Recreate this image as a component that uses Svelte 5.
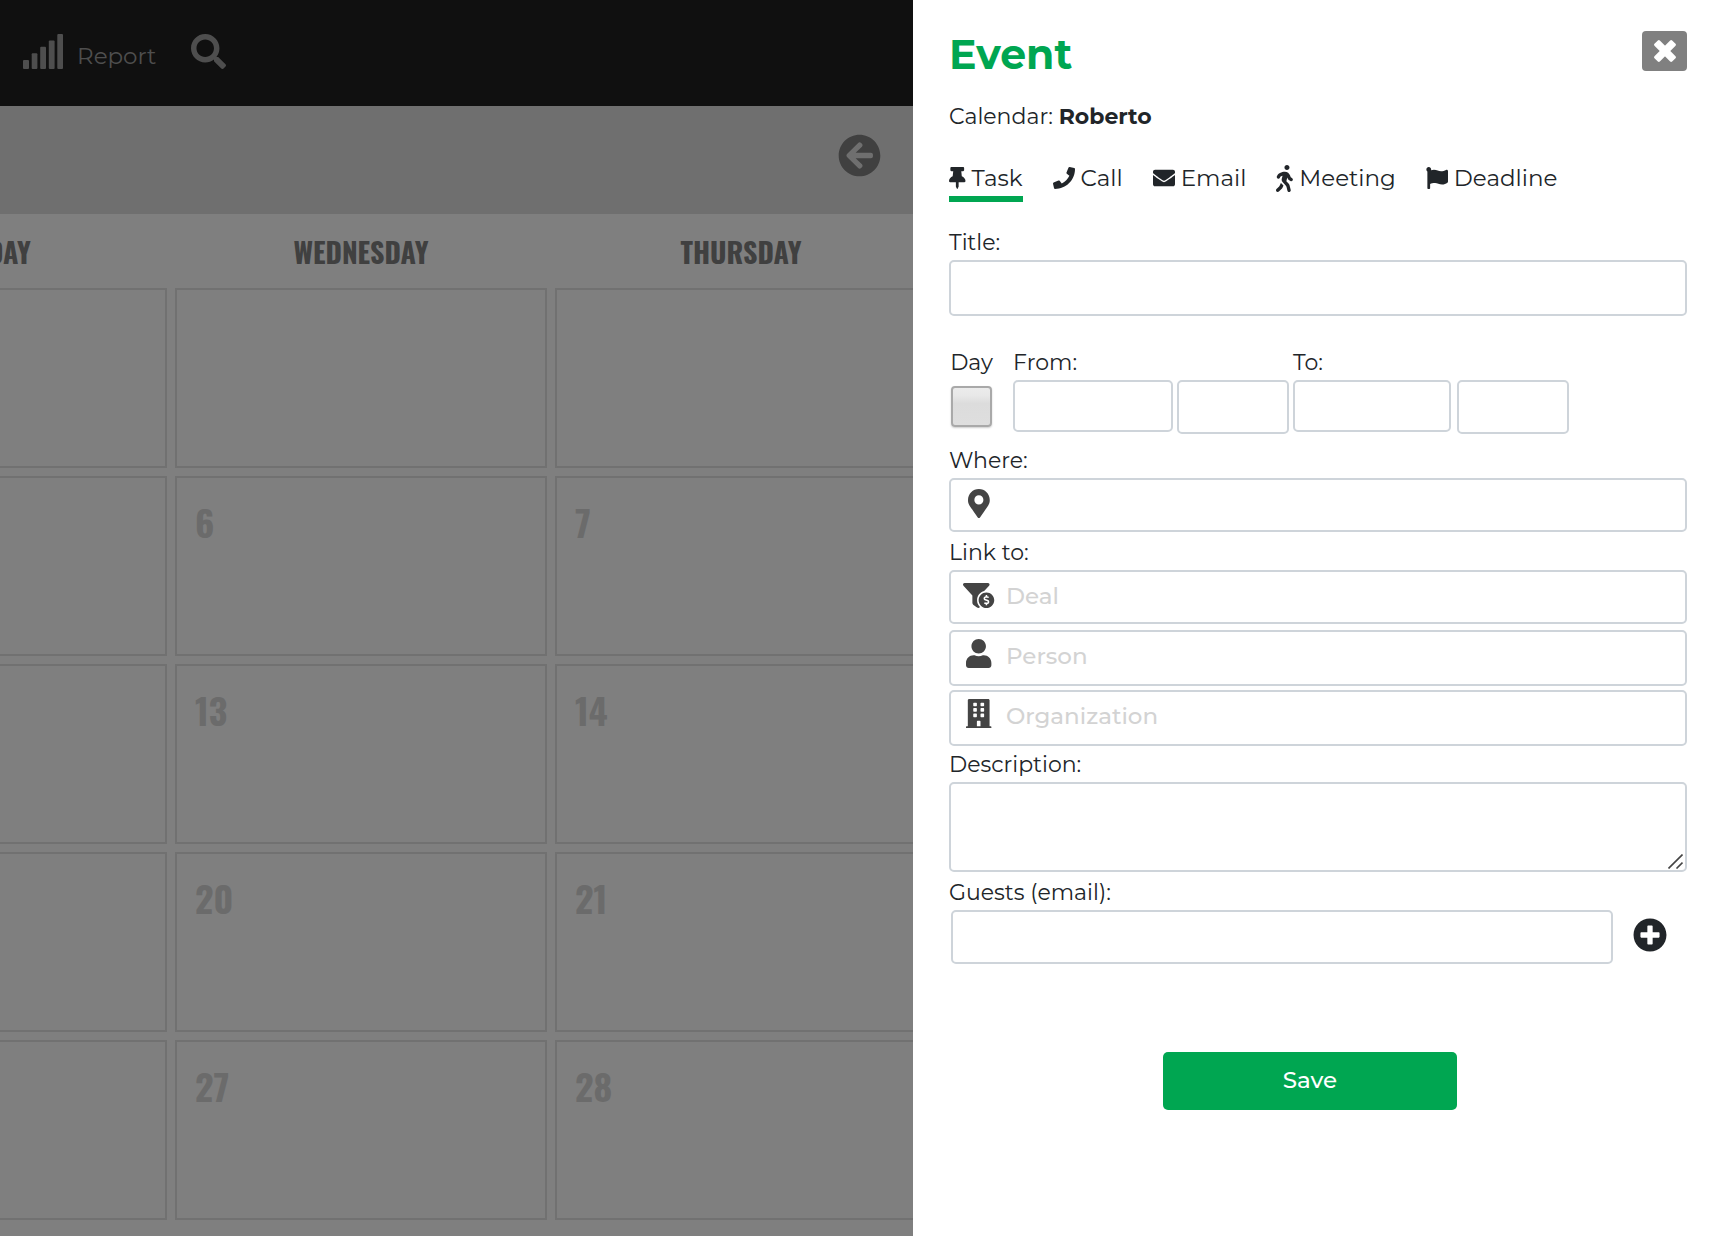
<script lang="ts">
  const icons = {
    search: { w: 512, d: 'M505 442.7L405.3 343c-4.5-4.5-10.6-7-17-7H372c27.6-35.3 44-79.7 44-128C416 93.1 322.9 0 208 0S0 93.1 0 208s93.1 208 208 208c48.3 0 92.7-16.4 128-44v16.3c0 6.4 2.5 12.5 7 17l99.7 99.7c9.4 9.4 24.6 9.4 33.9 0l28.3-28.3c9.4-9.4 9.4-24.6.1-34zM208 336c-70.7 0-128-57.2-128-128 0-70.7 57.2-128 128-128 70.7 0 128 57.2 128 128 0 70.7-57.2 128-128 128z' },
    back: { w: 512, d: 'M256 504C119 504 8 393 8 256S119 8 256 8s248 111 248 248-111 248-248 248zm28.9-143.6L209.4 288H392c13.3 0 24-10.7 24-24v-16c0-13.3-10.7-24-24-24H209.4l75.5-72.4c9.7-9.3 9.9-24.8.4-34.3l-11-10.9c-9.4-9.4-24.6-9.4-33.9 0L107.7 239c-9.4 9.4-9.4 24.6 0 33.9l132.7 132.7c9.4 9.4 24.6 9.4 33.9 0l11-10.9c9.5-9.5 9.3-25-.4-34.3z' },
    thumbtack: { w: 384, d: 'M298.028 214.267L285.793 96H328c13.255 0 24-10.745 24-24V24c0-13.255-10.745-24-24-24H56C42.745 0 32 10.745 32 24v48c0 13.255 10.745 24 24 24h42.207L85.972 214.267C37.465 236.82 0 277.261 0 328c0 13.255 10.745 24 24 24h136v104.007c0 1.242.289 2.467.845 3.578l24 48c2.941 5.882 11.364 5.893 14.311 0l24-48a8.008 8.008 0 0 0 .845-3.578V352h136c13.255 0 24-10.745 24-24-.001-51.183-37.983-91.42-85.973-113.733z' },
    phone: { w: 512, d: 'M493.4 24.6l-104-24c-11.3-2.6-22.9 3.3-27.5 13.9l-48 112c-4.2 9.8-1.4 21.3 6.9 28l60.6 49.6c-36 76.7-98.9 140.5-177.2 177.2l-49.6-60.6c-6.8-8.3-18.2-11.1-28-6.9l-112 48C3.9 366.5-2 378.1.6 389.4l24 104C27.1 504.2 36.7 512 48 512c256.1 0 464-207.5 464-464 0-11.2-7.7-20.9-18.6-23.4z' },
    envelope: { w: 512, d: 'M502.3 190.8c3.9-3.1 9.7-.2 9.7 4.7V400c0 26.5-21.5 48-48 48H48c-26.5 0-48-21.5-48-48V195.6c0-5 5.7-7.8 9.7-4.7 22.4 17.4 52.1 39.5 154.1 113.6 21.1 15.4 56.7 47.8 92.2 47.6 35.7.3 72-32.8 92.3-47.6 102-74.1 131.6-96.3 154-113.7zM256 320c23.2.4 56.6-29.2 73.4-41.4 132.7-96.3 142.8-104.7 173.4-128.7 5.8-4.5 9.2-11.5 9.2-18.9v-19c0-26.5-21.5-48-48-48H48c-26.5 0-48 21.5-48 48v19c0 7.4 3.4 14.3 9.2 18.9 30.6 23.9 40.7 32.4 173.4 128.7 16.8 12.2 50.2 41.8 73.4 41.4z' },
    walking: { w: 320, d: 'M208 96c26.5 0 48-21.5 48-48S234.5 0 208 0s-48 21.5-48 48 21.5 48 48 48zm94.5 149.1l-23.3-11.8-9.7-29.4c-14.7-44.6-55.7-75.8-102.2-75.9-36-.1-55.9 10.1-93.3 25.2-21.6 8.7-39.3 25.2-49.7 46.2L17.6 213c-7.8 15.8-1.5 35 14.2 42.9 15.6 7.9 34.6 1.5 42.5-14.3L81 228c3.5-7 9.3-12.5 16.5-15.4l26.8-10.8-15.2 60.7c-5.2 20.8.4 42.9 14.9 58.8l59.9 65.4c7.2 7.9 12.3 17.4 14.9 27.7l18.3 73.3c4.3 17.1 21.7 27.6 38.8 23.3 17.1-4.3 27.6-21.7 23.3-38.8l-22.2-89c-2.6-10.3-7.7-19.9-14.9-27.7l-45.5-49.7 17.2-68.7 5.5 16.5c5.3 16.1 16.7 29.4 31.7 37l23.3 11.8c15.6 7.9 34.6 1.5 42.5-14.3 7.7-15.7 1.4-35.1-14.3-43zM73.6 385.8c-3.2 8.1-8 15.4-14.2 21.5l-50 50.1c-12.5 12.5-12.5 32.8 0 45.3s32.7 12.5 45.2 0l59.4-59.4c6.1-6.1 10.9-13.4 14.2-21.5l13.5-33.8c-55.3-60.3-38.7-41.8-47.4-53.7l-20.7 51.5z' },
    flag: { w: 512, d: 'M349.565 98.783C295.978 98.783 251.721 64 184.348 64c-24.955 0-47.309 4.384-68.045 12.013a55.947 55.947 0 0 0 3.586-23.562C118.117 24.015 94.806 1.206 66.338.048 34.345-1.254 8 24.296 8 56c0 19.026 9.497 35.825 24 45.945V488c0 13.255 10.745 24 24 24h16c13.255 0 24-10.745 24-24v-94.4c28.311-12.064 63.582-22.122 114.435-22.122 53.588 0 97.844 34.783 165.217 34.783 48.169 0 86.667-16.294 122.505-40.858C506.84 359.452 512 349.571 512 339.045v-243.1c0-23.393-24.269-38.87-45.485-29.016-34.338 15.948-76.454 31.854-116.95 31.854z' },
    marker: { w: 384, d: 'M172.268 501.67C26.97 291.031 0 269.413 0 192 0 85.961 85.961 0 192 0s192 85.961 192 192c0 77.413-26.97 99.031-172.268 309.67-9.535 13.774-29.93 13.773-39.464 0zM192 272c44.183 0 80-35.817 80-80s-35.817-80-80-80-80 35.817-80 80 35.817 80 80 80z' },
    funnel: { w: 640, d: 'M433.46 165.94l101.2-111.87C554.61 34.12 540.48 0 512.26 0H31.74C3.52 0-10.61 34.12 9.34 54.07L192 256v155.92c0 12.59 5.93 24.44 16 32l79.99 60c20.86 15.64 48.47 6.97 59.22-13.57C310.8 455.38 288 406.35 288 352c0-89.79 62.05-165.17 145.46-186.06zM480 192c-88.37 0-160 71.63-160 160s71.63 160 160 160 160-71.63 160-160-71.63-160-160-160zm16 239.88V448c0 4.42-3.58 8-8 8h-16c-4.42 0-8-3.58-8-8v-16.29c-11.29-.58-22.27-4.52-31.37-11.35-3.9-2.93-4.1-8.77-.57-12.14l11.75-11.21c2.77-2.64 6.89-2.76 10.13-.73 3.87 2.42 8.26 3.72 12.82 3.72h28.11c6.5 0 11.8-5.92 11.8-13.19 0-5.95-3.61-11.19-8.77-12.73l-45-13.5c-18.59-5.58-31.58-23.42-31.58-43.39 0-24.52 19.05-44.44 42.67-45.07V256c0-4.42 3.58-8 8-8h16c4.42 0 8 3.58 8 8v16.29c11.29.58 22.27 4.51 31.37 11.35 3.9 2.93 4.1 8.77.57 12.14l-11.75 11.21c-2.77 2.64-6.89 2.76-10.13.73-3.87-2.43-8.26-3.72-12.82-3.72h-28.11c-6.5 0-11.8 5.92-11.8 13.19 0 5.95 3.61 11.19 8.77 12.73l45 13.5c18.59 5.58 31.58 23.42 31.58 43.39 0 24.53-19.04 44.44-42.67 45.07z' },
    user: { w: 448, d: 'M224 256c70.7 0 128-57.3 128-128S294.7 0 224 0 96 57.3 96 128s57.3 128 128 128zm89.6 32h-16.7c-22.2 10.2-46.9 16-72.9 16s-50.6-5.8-72.9-16h-16.7C60.2 288 0 348.2 0 422.4V464c0 26.5 21.5 48 48 48h352c26.5 0 48-21.5 48-48v-41.6c0-74.2-60.2-134.4-134.4-134.4z' },
    building: { w: 448, d: 'M436 480h-20V24c0-13.3-10.7-24-24-24H56C42.7 0 32 10.7 32 24v456H12c-6.6 0-12 5.4-12 12v20h448v-20c0-6.6-5.4-12-12-12zM140 64h40q12 0 12 12v40q0 12-12 12h-40q-12 0-12-12V76q0-12 12-12zM268 64h40q12 0 12 12v40q0 12-12 12h-40q-12 0-12-12V76q0-12 12-12zM140 160h40q12 0 12 12v40q0 12-12 12h-40q-12 0-12-12v-40q0-12 12-12zM268 160h40q12 0 12 12v40q0 12-12 12h-40q-12 0-12-12v-40q0-12 12-12zM140 256h40q12 0 12 12v40q0 12-12 12h-40q-12 0-12-12v-40q0-12 12-12zM268 256h40q12 0 12 12v40q0 12-12 12h-40q-12 0-12-12v-40q0-12 12-12zM204 384h40q12 0 12 12v84h-64v-84q0-12 12-12z' },
    plus: { w: 512, d: 'M256 8C119 8 8 119 8 256s111 248 248 248 248-111 248-248S393 8 256 8zm144 276c0 6.6-5.4 12-12 12h-92v92c0 6.6-5.4 12-12 12h-56c-6.6 0-12-5.4-12-12v-92h-92c-6.6 0-12-5.4-12-12v-56c0-6.6 5.4-12 12-12h92v-92c0-6.6 5.4-12 12-12h56c6.6 0 12 5.4 12 12v92h92c6.6 0 12 5.4 12 12v56z' },
  };

  type IconName = keyof typeof icons;

  const weekdays = ['Tuesday', 'Wednesday', 'Thursday'];
  const days = ['', '', '', '', '6', '7', '', '13', '14', '', '20', '21', '', '27', '28'];

  const types: { label: string; icon: IconName; big?: boolean }[] = [
    { label: 'Task', icon: 'thumbtack' },
    { label: 'Call', icon: 'phone' },
    { label: 'Email', icon: 'envelope' },
    { label: 'Meeting', icon: 'walking', big: true },
    { label: 'Deadline', icon: 'flag' },
  ];

  const links: { label: string; icon: IconName }[] = [
    { label: 'Deal', icon: 'funnel' },
    { label: 'Person', icon: 'user' },
    { label: 'Organization', icon: 'building' },
  ];

  let selected = $state('Task');
</script>

{#snippet icon(name: IconName)}
  <svg class="icon" viewBox="0 0 {icons[name].w} 512" aria-hidden="true">
    <path fill="currentColor" fill-rule="evenodd" d={icons[name].d} />
  </svg>
{/snippet}

<div class="page">
  <main class="calendar">
    <header class="topbar">
      <a class="report" href="/report">
        <svg class="signal" viewBox="0 0 40 35" aria-hidden="true">
          <rect x="0" y="26" width="6" height="9" rx="1" />
          <rect x="8.7" y="19.3" width="5.7" height="15.7" rx="1" />
          <rect x="17.2" y="12.8" width="5.8" height="22.2" rx="1" />
          <rect x="25.8" y="6.4" width="5.8" height="28.6" rx="1" />
          <rect x="34.3" y="0" width="5.7" height="35" rx="1" />
        </svg>
        <span>Report</span>
      </a>
      <button class="search" type="button" aria-label="Search">{@render icon('search')}</button>
    </header>

    <div class="toolbar">
      <button class="back" type="button" aria-label="Previous month">{@render icon('back')}</button>
    </div>

    <div class="month">
      {#each weekdays as weekday}
        <div class="weekday">{weekday}</div>
      {/each}
      {#each days as day}
        <div class="day">{day}</div>
      {/each}
    </div>
  </main>

  <aside class="drawer" aria-labelledby="event-heading">
    <div class="drawer-head">
      <h1 id="event-heading">Event</h1>
      <button class="close" type="button" aria-label="Close">
        <svg viewBox="0 0 24 24" aria-hidden="true">
          <g transform="rotate(45 12 12)" fill="currentColor">
            <rect x="-.5" y="8.2" width="25" height="7.6" rx="1.4" />
            <rect x="8.2" y="-.5" width="7.6" height="25" rx="1.4" />
          </g>
        </svg>
      </button>
    </div>

    <p class="owner">Calendar: <strong>Roberto</strong></p>

    <div class="types">
      {#each types as type}
        <button
          class="type"
          class:active={selected === type.label}
          class:big={type.big}
          type="button"
          aria-pressed={selected === type.label}
          onclick={() => (selected = type.label)}
        >
          {@render icon(type.icon)}
          {type.label}
        </button>
      {/each}
    </div>

    <form onsubmit={(e) => e.preventDefault()}>
      <label for="title">Title:</label>
      <input class="box tall" id="title" type="text" />

      <div class="when">
        <div class="all-day">
          <label for="day">Day</label>
          <input id="day" type="checkbox" />
        </div>
        <div class="date from">
          <label for="from">From:</label>
          <input class="box short" id="from" type="text" />
        </div>
        <input class="box time" type="text" aria-label="From time" />
        <div class="date to">
          <label for="to">To:</label>
          <input class="box short" id="to" type="text" />
        </div>
        <input class="box time last" type="text" aria-label="To time" />
      </div>

      <label for="where">Where:</label>
      <div class="box with-icon">
        <span class="slot">{@render icon('marker')}</span>
        <input id="where" type="text" />
      </div>

      <label class="spaced" for="link-deal">Link to:</label>
      <div class="links">
        {#each links as link, i}
          <div class="box with-icon" class:tall={i > 0}>
            <span class="slot" class:wide={link.icon === 'funnel'}>{@render icon(link.icon)}</span>
            <input id="link-{link.label.toLowerCase()}" type="text" placeholder={link.label} aria-label={link.label} />
          </div>
        {/each}
      </div>

      <label for="description">Description:</label>
      <div class="description">
        <textarea class="box" id="description"></textarea>
        <svg class="grip" viewBox="0 0 15 15" aria-hidden="true">
          <path d="M.5 14.5l14-14M8.5 14.5l6-6" fill="none" stroke="#444" stroke-width="1.6" />
        </svg>
      </div>

      <label class="spaced" for="guests">Guests (email):</label>
      <div class="guests">
        <input class="box" id="guests" type="email" />
        <button class="add" type="button" aria-label="Add guest">{@render icon('plus')}</button>
      </div>

      <div class="actions">
        <button class="save" type="submit">Save</button>
      </div>
    </form>
  </aside>
</div>

<style>
  :global(body) {
    background: #fff;
  }

  .page {
    display: grid;
    grid-template-columns: minmax(0, 1fr) 808px;
    min-height: 100vh;
    font-family: Montserrat, Inter, "Noto Sans", sans-serif;
    color: #212529;
  }

  .page *,
  .page *::after {
    box-sizing: border-box;
  }

  button {
    margin: 0;
    border: 0;
    padding: 0;
    background: none;
    color: inherit;
    font: inherit;
    cursor: pointer;
  }

  .icon {
    display: block;
    height: 100%;
  }

  .calendar {
    position: relative;
    overflow: hidden;
    background: #fff;
  }

  .calendar::after {
    content: "";
    position: absolute;
    inset: 0;
    background: rgba(0, 0, 0, 0.5);
  }

  .topbar {
    display: flex;
    align-items: center;
    gap: 35px;
    height: 106px;
    padding: 0 23px 3px;
    background: #202020;
    color: #9c9c9c;
  }

  .report {
    display: flex;
    align-items: center;
    gap: 14px;
    color: inherit;
    font-size: 23px;
    line-height: 36px;
    text-decoration: none;
  }

  .report span {
    padding-top: 8px;
  }

  .signal {
    width: 40px;
    height: 35px;
    fill: currentColor;
  }

  .search {
    height: 35px;
  }

  .toolbar {
    display: flex;
    align-items: center;
    justify-content: flex-end;
    height: 108px;
    padding: 0 32px 10px;
    background: #dfdfdf;
    color: #808080;
  }

  .back {
    height: 43px;
  }

  .month {
    display: grid;
    grid-template-columns: repeat(3, minmax(0, 1fr));
    grid-template-rows: 66px;
    grid-auto-rows: 180px;
    gap: 8px;
    margin: 0 -14px 16px -205px;
    font-family: Oswald, "Roboto Condensed", Roboto, sans-serif;
    font-weight: 700;
  }

  .weekday {
    padding-top: 8px;
    color: #808080;
    font-size: 28px;
    line-height: 60px;
    text-align: center;
    text-transform: uppercase;
  }

  .day {
    border: 2px solid #e2e2e2;
    padding: 20px 18px;
    color: #d6d6d6;
    font-size: 36px;
    line-height: 48px;
  }

  .drawer {
    padding: 24px 34px 48px 36px;
    background: #fff;
  }

  .drawer-head {
    display: flex;
    align-items: flex-start;
    justify-content: space-between;
    height: 56px;
  }

  h1 {
    margin: 0;
    color: #00a651;
    font-size: 41px;
    font-weight: 700;
    line-height: 60px;
  }

  .close {
    display: grid;
    place-items: center;
    width: 45px;
    height: 40px;
    margin-top: 7px;
    border-radius: 4px;
    background: #808080;
    color: #fff;
  }

  .close svg {
    width: 24px;
    height: 24px;
  }

  .owner {
    height: 36px;
    margin: 18px 0 0;
    font-size: 22px;
    line-height: 38px;
  }

  .types {
    display: flex;
    gap: 30px;
    margin-top: 24px;
  }

  .type {
    display: flex;
    align-items: center;
    gap: 6px;
    height: 44px;
    border-bottom: 6px solid transparent;
    padding-top: 2px;
    font-size: 23px;
    line-height: 36px;
  }

  .type.active {
    border-bottom-color: #00a651;
  }

  .type :global(.icon) {
    height: 22px;
  }

  .type.big :global(.icon) {
    height: 27px;
  }

  form {
    margin-top: 22px;
  }

  label {
    display: block;
    height: 36px;
    font-size: 22px;
    line-height: 38px;
  }

  .spaced {
    margin-top: 2px;
  }

  .box {
    display: block;
    width: 100%;
    height: 54px;
    margin: 0;
    border: 2px solid #ced4da;
    border-radius: 5px;
    padding: 0 16px;
    background: #fff;
    color: inherit;
    font: inherit;
    font-size: 23px;
  }

  .box.tall {
    height: 56px;
  }

  .box.short {
    height: 52px;
  }

  .when {
    display: flex;
    align-items: flex-start;
    gap: 4px;
    margin: 28px 0 8px;
  }

  .all-day {
    display: flex;
    flex-direction: column;
    align-items: center;
    width: 45px;
    margin-right: 15px;
  }

  .all-day input {
    width: 41px;
    height: 41px;
    margin: 6px 0 0;
    appearance: none;
    border: 2px solid #a9a9a9;
    border-radius: 4px;
    background: linear-gradient(#ececec, #e8e8e8 20%, #dcdcdc 42%, #dedede);
    box-shadow: 0 1px 2px rgba(0, 0, 0, 0.2);
  }

  .all-day input:checked {
    background: #00a651;
  }

  .date {
    flex: 0 1 160px;
  }

  .date.to {
    flex-basis: 158px;
  }

  .box.time {
    flex: 0 1 112px;
    min-width: 0;
    margin-top: 36px;
  }

  .box.last {
    margin-left: 2px;
  }

  .box.with-icon {
    display: flex;
    gap: 9px;
    padding: 0 10px;
  }

  .with-icon input {
    flex: 1;
    min-width: 0;
    height: 48px;
    border: 0;
    padding: 0;
    background: none;
    color: inherit;
    font: inherit;
    outline: none;
  }

  .with-icon input::placeholder {
    color: #d3d3d3;
    font-weight: 500;
    opacity: 1;
  }

  .slot {
    display: grid;
    flex: none;
    place-items: center;
    width: 36px;
    height: 46px;
    color: #444;
  }

  .tall .slot {
    height: 42px;
  }

  .slot :global(.icon) {
    height: 29px;
  }

  .slot.wide :global(.icon) {
    height: 25px;
  }

  .links {
    display: grid;
    grid-auto-rows: 56px;
    gap: 4px;
  }

  .description {
    position: relative;
  }

  textarea.box {
    height: 90px;
    padding: 10px 16px;
    resize: none;
  }

  .grip {
    position: absolute;
    right: 4px;
    bottom: 3px;
    width: 15px;
    height: 15px;
    pointer-events: none;
  }

  .guests {
    display: flex;
    gap: 20px;
    padding: 0 20px 0 2px;
  }

  .guests .box {
    flex: 1;
  }

  .add {
    height: 34px;
    margin-top: 8px;
  }

  .actions {
    display: flex;
    justify-content: center;
    margin-top: 88px;
    padding-right: 16px;
  }

  .save {
    width: 294px;
    height: 58px;
    border-radius: 5px;
    padding-bottom: 2px;
    background: #00a651;
    color: #fff;
    font-size: 23px;
    font-weight: 500;
  }
</style>
